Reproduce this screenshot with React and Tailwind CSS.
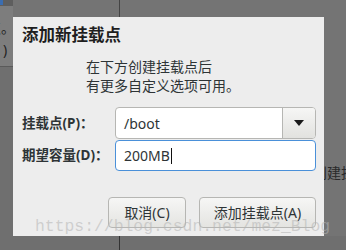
import React from "react";

const font = { fontFamily: '"Noto Sans", "Noto Sans CJK SC", sans-serif' };

export default function App() {
  return (
    <div
      className="relative w-[346px] h-[250px] overflow-hidden bg-[#747474] text-[#2e3436]"
      style={font}
    >
      {/* dimmed window behind the dialog */}
      <div className="absolute left-0 top-0 w-[13px] h-[6px] bg-[#5e5e5e]">
        <div className="w-[3px] h-[5px] bg-[#3b6db0]" />
      </div>
      <div className="absolute left-0 top-[6px] w-[13px] h-[60px] bg-[#7d7d7d] overflow-hidden">
        <div className="absolute right-[-2px] top-[13px] text-[14px] leading-[18px] text-[#222] whitespace-nowrap">
          挂载点。
        </div>
        <div className="absolute left-[3px] top-[35px] text-[14px] leading-[18px] text-[#222]">)</div>
      </div>
      <div className="absolute left-0 top-[66px] w-[13px] h-px bg-[#5a5a5a]" />
      <div className="absolute left-0 top-[67px] w-[13px] h-[183px] bg-[#6f6f6f]" />
      <div className="absolute left-0 top-[236px] w-[346px] h-[14px] bg-[#6f6f6f]" />
      <div className="absolute left-[119px] top-0 w-px h-[17px] bg-[#444]" />
      <div className="absolute left-[119px] top-[236px] w-px h-[14px] bg-[#333]" />
      <div className="absolute left-[313px] top-[163px] text-[14px] leading-[20px] text-[#2a2a2a] whitespace-nowrap">
        创建挂载点
      </div>

      {/* dialog */}
      <div className="relative z-10 ml-[13px] mt-[17px] w-[311px] h-[219px] bg-[#ededed] pt-[6px] pl-[9px] pr-[8px] flex flex-col">
        <h1 className="text-[16.5px] font-bold leading-[24px] text-[#1e1e1e]">添加新挂载点</h1>
        <div className="mt-[10px] pl-[64px] text-[14px] leading-[19px]">
          <div>在下方创建挂载点后</div>
          <div>有更多自定义选项可用。</div>
        </div>

        <div className="mt-[12px] flex flex-col gap-px">
          <div className="flex items-center h-[32px]">
            <div className="w-[93px] text-[13.5px] font-bold">挂载点(P)：</div>
            <div className="flex-1 h-full flex rounded-[4px] border border-[#b6b6b3] bg-white overflow-hidden">
              <div className="flex-1 flex items-center pl-[8px] text-[14px]">/boot</div>
              <div className="w-[33px] flex items-center justify-center border-l border-[#b6b6b3] bg-gradient-to-b from-[#f6f6f5] to-[#e2e2df]">
                <svg width="10" height="6" viewBox="0 0 10 6">
                  <path d="M0 0 L10 0 L5 6 Z" fill="#1a1a1a" />
                </svg>
              </div>
            </div>
          </div>
          <div className="flex items-center h-[31px]">
            <div className="w-[93px] text-[13.5px] font-bold">期望容量(D)：</div>
            <div className="flex-1 h-full flex items-center rounded-[4px] border border-[#4a90d9] bg-white pl-[8px] text-[14px]">
              200MB<span className="ml-px w-px h-[16px] bg-[#111]" />
            </div>
          </div>
        </div>

        <div className="mt-[26px] flex justify-end gap-[13px]">
          <button className="w-[78px] h-[31px] rounded-[4px] border border-[#b6b6b3] bg-gradient-to-b from-[#f6f6f5] to-[#e4e4e1] text-[14px]">
            取消(C)
          </button>
          <button className="w-[117px] h-[31px] rounded-[4px] border border-[#b6b6b3] bg-gradient-to-b from-[#f6f6f5] to-[#e4e4e1] text-[14px]">
            添加挂载点(A)
          </button>
        </div>
      </div>

      {/* watermark */}
      <div
        className="absolute z-20 left-[35px] top-[215px] text-[16.4px] leading-[24px] text-[rgba(181,181,181,0.56)] whitespace-nowrap"
        style={{ fontFamily: '"Liberation Mono", monospace' }}
      >
        https://blog.csdn.net/mez_Blog
      </div>
    </div>
  );
}
